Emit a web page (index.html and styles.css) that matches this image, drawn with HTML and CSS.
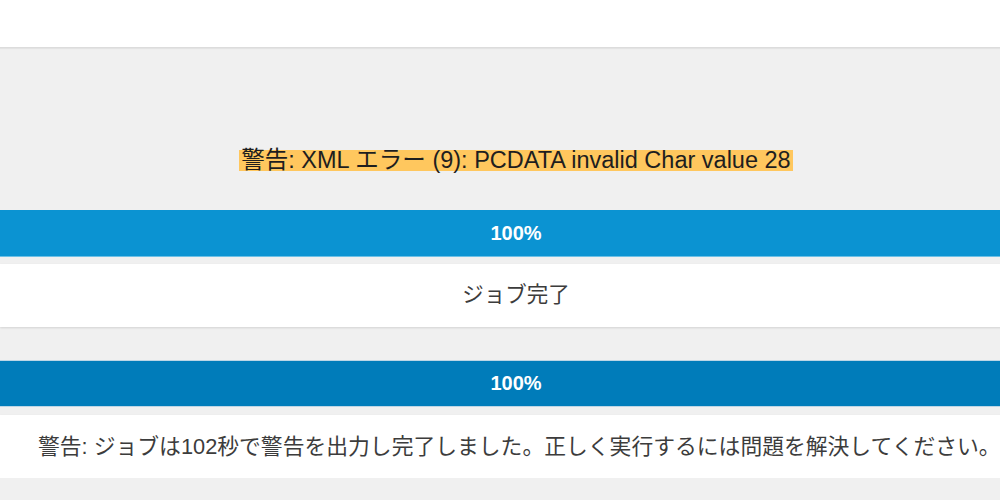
FILE: index.html
```html
<!DOCTYPE html>
<html lang="ja">
<head>
    <meta charset="UTF-8">
    <meta name="viewport" content="width=device-width, initial-scale=1.0">
    <title>ジョブ状況</title>
    <link rel="stylesheet" href="styles.css">
</head>
<body>
    <div class="page">
        <div class="topbar"></div>

        <div class="notice">
            <span class="notice-text">警告: XML エラー (9): PCDATA invalid Char value 28</span>
        </div>

        <div class="progress">100%</div>
        <div class="result">ジョブ完了</div>

        <div class="progress progress-dark">100%</div>
        <div class="result result-left">警告: ジョブは102秒で警告を出力し完了しました。正しく実行するには問題を解決してください。</div>
    </div>
</body>
</html>
```

FILE: styles.css
```css
html, body { margin: 0; padding: 0; }
body { background-color: #f0f0f0; overflow: hidden; font-family: "Liberation Sans", "Noto Sans CJK JP", sans-serif; }
.page { width: 1032px; }
.topbar { height: 47px; background-color: #fff; border-bottom: 1px solid #dcdcdc; box-shadow: 0 1px 1px rgba(0, 0, 0, 0.05); }
.notice { margin-top: 102px; height: 21px; text-align: center; font-size: 23.5px; line-height: 21px; color: #1e1e1e; }
.notice-text { display: inline-block; background-color: #ffc75e; padding: 0 2px; }
.progress { margin-top: 39px; height: 46px; line-height: 46px; background-color: #0b93d2; border-bottom: 1px solid #6cc0e6; color: #fff; font-size: 20px; font-weight: bold; text-align: center; }
.progress-dark { margin-top: 33px; background-color: #007cba; border-top: 1px solid #bcd6e6; border-bottom: 1px solid #bcd6e6; height: 45px; line-height: 45px; }
.result { margin-top: 7px; height: 63px; line-height: 63px; background-color: #fff; box-shadow: 0 1px 2px rgba(0, 0, 0, 0.12); color: #3c3c3c; font-size: 21.5px; text-align: center; }
.result-left { margin-top: 8px; text-align: left; padding-left: 38px; font-size: 21.8px; white-space: nowrap; }
```
